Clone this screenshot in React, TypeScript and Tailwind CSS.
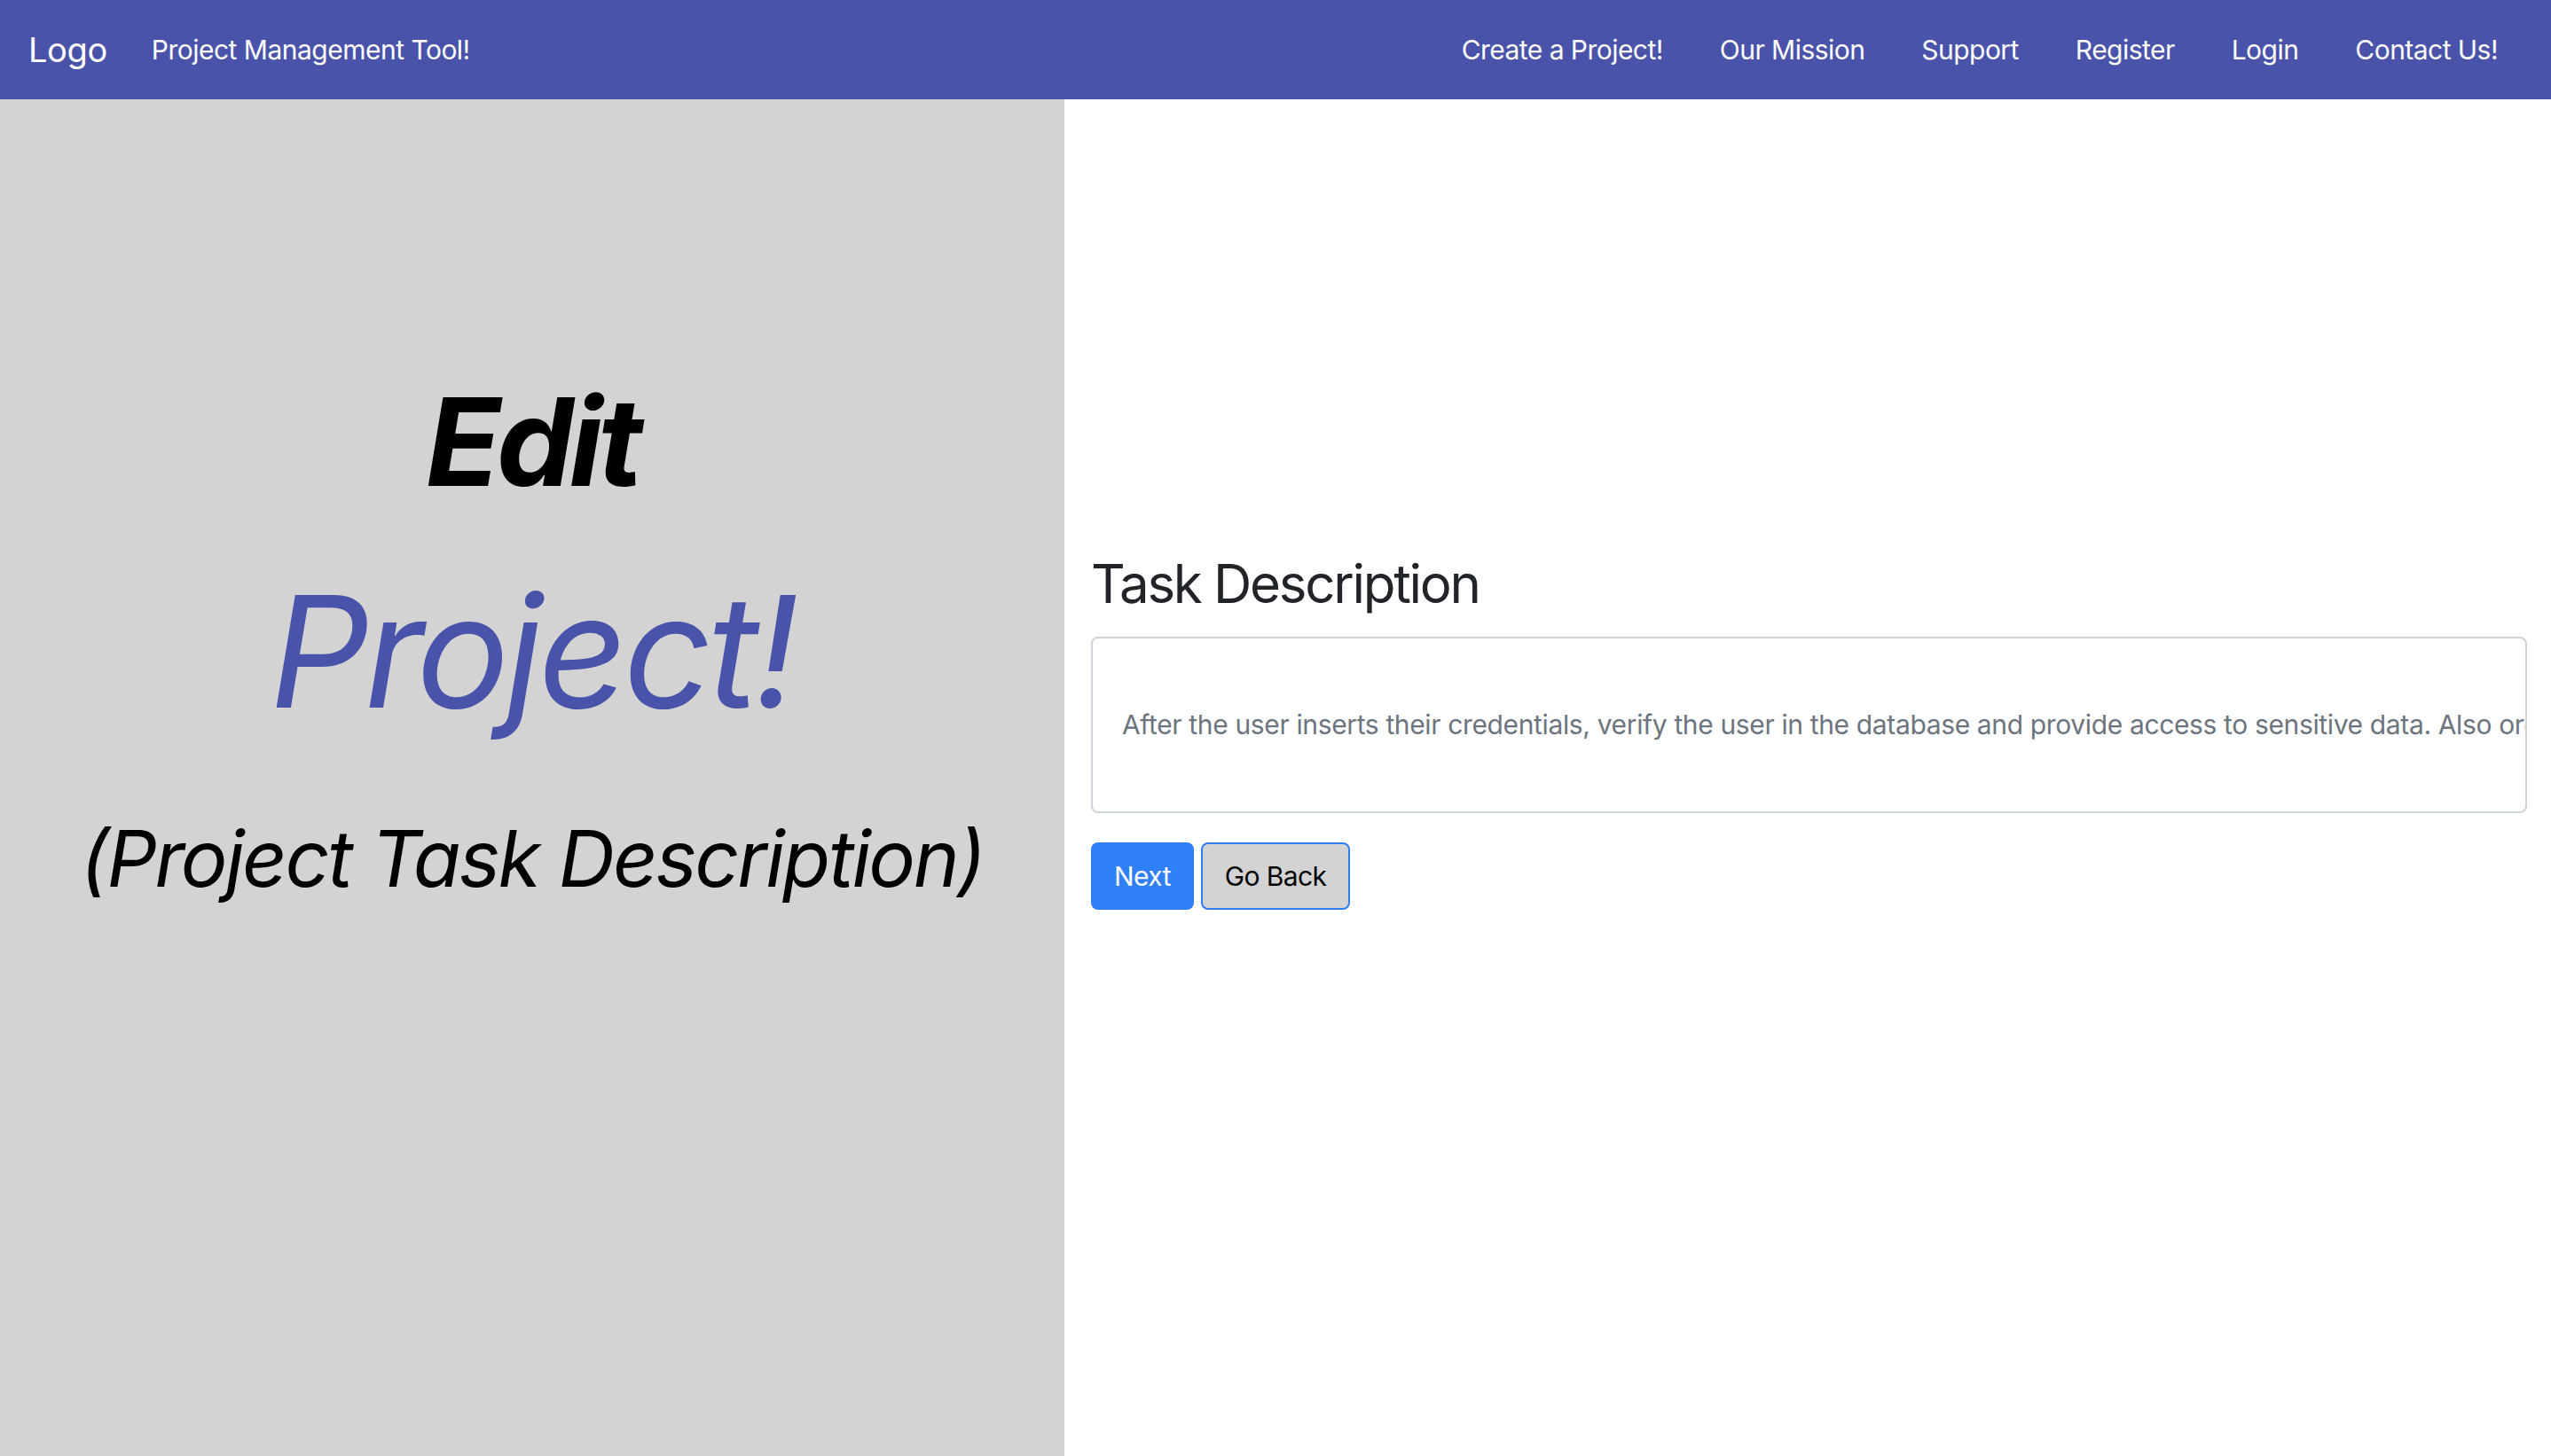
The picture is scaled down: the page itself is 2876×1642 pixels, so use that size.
import React from "react";

export default function App() {
  const links = ["Create a Project!", "Our Mission", "Support", "Register", "Login", "Contact Us!"];
  return (
    <div className="w-[2876px] h-[1642px] flex flex-col bg-white overflow-hidden" style={{ fontFamily: "Inter, 'Noto Sans', sans-serif" }}>
      <nav className="h-[112px] shrink-0 bg-[#4953a9] flex items-center justify-between pl-[32px] pr-[60px] text-white">
        <div className="flex items-center">
          <span className="text-[38px] leading-none tracking-[-0.01em]">Logo</span>
          <span className="text-[30px] leading-none ml-[50px] tracking-[-0.017em]">Project Management Tool!</span>
        </div>
        <div className="flex items-center gap-[64px] text-[30px] leading-none tracking-[-0.018em]">
          {links.map((l) => (
            <span key={l}>{l}</span>
          ))}
        </div>
      </nav>
      <div className="flex flex-1 min-h-0">
        <div className="w-[1200px] shrink-0 bg-[#d3d3d3] flex flex-col items-center pt-[303px]">
          <h1 className="text-[138px] leading-[166px] font-bold italic text-black tracking-[-0.036em]">Edit</h1>
          <h1 className="mt-[48px] text-[175px] leading-[210px] italic text-[#4953a9] tracking-[-0.028em]">Project!</h1>
          <h2 className="mt-[76px] text-[88px] leading-[106px] italic text-black tracking-[-0.027em]">(Project Task Description)</h2>
        </div>
        <div className="flex-1 min-w-0 flex flex-col pt-[508px] pl-[30px] pr-[27px]">
          <h2 className="text-[60px] leading-[77px] text-[#212529] mb-[21px] tracking-[-0.038em]">Task Description</h2>
          <div className="h-[199px] w-full border-2 border-[#ced4da] rounded-[8px] flex items-center pl-[33px] overflow-hidden">
            <span className="text-[30px] text-[#6c757d] whitespace-nowrap tracking-[-0.012em]">
              After the user inserts their credentials, verify the user in the database and provide access to sensitive data. Also organize their projects on the dashboard.
            </span>
          </div>
          <div className="flex mt-[33px] gap-[8px]">
            <button className="h-[76px] w-[116px] rounded-[8px] bg-[#2f7ff8] text-white text-[30px] border-2 border-[#2f7ff8] tracking-[-0.02em]">Next</button>
            <button className="h-[76px] w-[168px] rounded-[8px] bg-[#d3d3d3] text-black text-[30px] border-2 border-[#2f7ff8] tracking-[-0.02em]">Go Back</button>
          </div>
        </div>
      </div>
    </div>
  );
}
